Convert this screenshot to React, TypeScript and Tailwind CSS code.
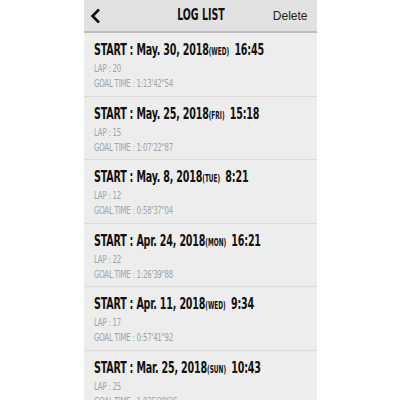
import React from 'react';

const logs = [
  { date: 'May. 30, 2018', day: 'WED', time: '16:45', lap: 20, goal: '1:13\'42"54' },
  { date: 'May. 25, 2018', day: 'FRI', time: '15:18', lap: 15, goal: '1:07\'22"87' },
  { date: 'May. 8, 2018', day: 'TUE', time: '8:21', lap: 12, goal: '0:58\'37"04' },
  { date: 'Apr. 24, 2018', day: 'MON', time: '16:21', lap: 22, goal: '1:26\'39"88' },
  { date: 'Apr. 11, 2018', day: 'WED', time: '9:34', lap: 17, goal: '0:57\'41"92' },
  { date: 'Mar. 25, 2018', day: 'SUN', time: '10:43', lap: 25, goal: '1:025\'28"36' },
];

// condensed face, squeezed a bit further to match the narrow display font
const narrow = "font-['DejaVu_Sans_Condensed','DejaVu_Sans',sans-serif] font-stretch-condensed";

export default function App() {
  return (
    <div className="w-[400px] h-[400px] bg-white flex justify-center overflow-hidden">
      <div className="w-[233px] h-full bg-[#ededed] flex flex-col">
        {/* Header */}
        <div className="h-[33px] shrink-0 bg-[#e1e1e1] border-b-2 border-[#bdbdbd] grid grid-cols-[1fr_auto_1fr] items-center pl-[6px] pr-[9px]">
          <svg width="12" height="16" viewBox="0 0 12 16" fill="none">
            <path d="M9 1.5 L2.5 8 L9 14.5" stroke="#111" strokeWidth="2.6" />
          </svg>
          <span className={`${narrow} font-bold text-[15px] text-[#111] scale-x-[0.7] whitespace-nowrap translate-x-[2px]`}>LOG LIST</span>
          <span className="justify-self-end font-['Liberation_Sans',sans-serif] text-[12px] text-[#222]">Delete</span>
        </div>

        {/* Rows */}
        {logs.map((log) => (
          <div
            key={log.date}
            className="h-[63.5px] shrink-0 border-b border-[#dcdcdc] pl-[10px] pt-[7px] flex flex-col"
          >
            <div className={`${narrow} font-bold text-[16.5px] leading-[20px] text-[#111] tracking-[-0.3px] whitespace-nowrap origin-left scale-x-[0.645]`}>
              START : {log.date}
              <span className="text-[10px] tracking-[0px]">({log.day})</span>
              <span className="ml-[8px]">{log.time}</span>
            </div>
            <div className={`${narrow} text-[10px] leading-[14px] text-[#a3a3a3] tracking-[-0.3px] whitespace-nowrap origin-left scale-x-[0.78]`}>
              LAP : {log.lap}
            </div>
            <div className={`${narrow} text-[10px] leading-[16px] text-[#a3a3a3] tracking-[-0.3px] whitespace-nowrap origin-left scale-x-[0.78]`}>
              GOAL TIME : {log.goal}
            </div>
          </div>
        ))}
      </div>
    </div>
  );
}
